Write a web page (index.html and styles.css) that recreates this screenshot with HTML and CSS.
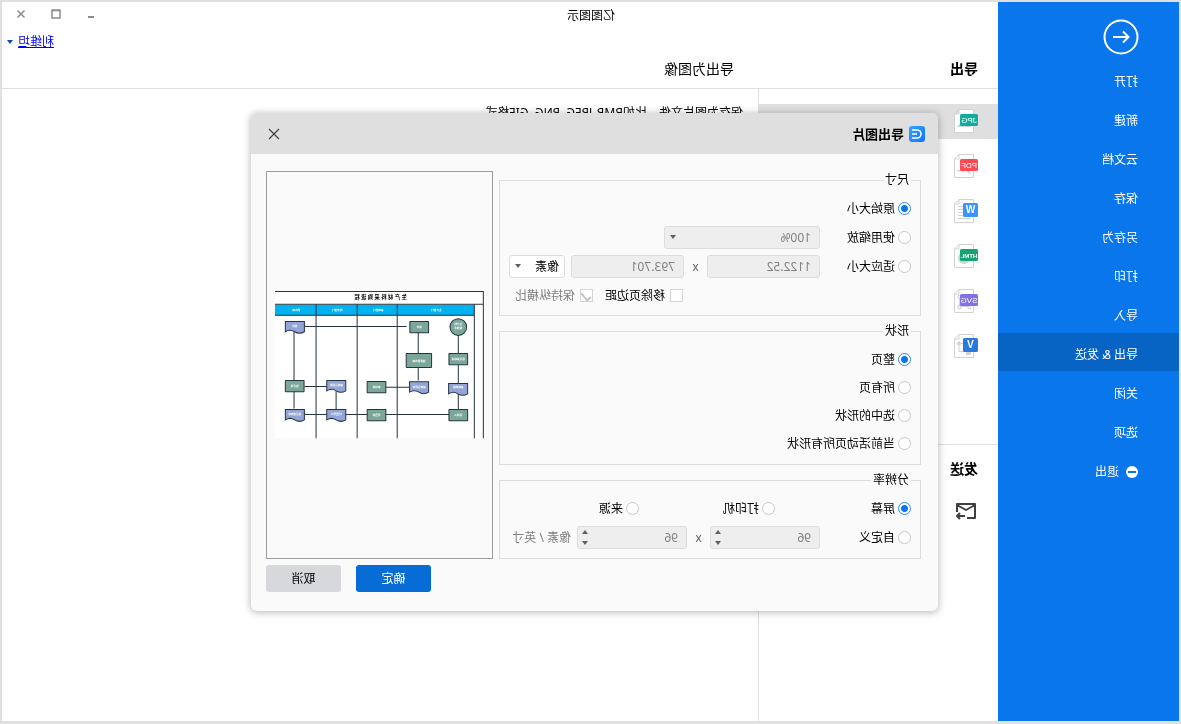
FILE: index.html
```html
<!DOCTYPE html>
<html lang="zh-CN">
<head>
<meta charset="utf-8">
<title>亿图图示</title>
<link rel="stylesheet" href="styles.css">
</head>
<body>
<div class="app">
  <nav class="sidebar">
    <button class="back" aria-label="返回">
      <svg viewBox="0 0 36 36"><circle cx="18" cy="18" r="16.5"/><path d="M26 18H11M16 12.500 10.500 18l5.500 5.500"/></svg>
    </button>
    <a class="nav-item" href="#">打开</a>
    <a class="nav-item" href="#">新建</a>
    <a class="nav-item" href="#">云文档</a>
    <a class="nav-item" href="#">保存</a>
    <a class="nav-item" href="#">另存为</a>
    <a class="nav-item" href="#">打印</a>
    <a class="nav-item" href="#">导入</a>
    <a class="nav-item active" href="#">导出 &amp; 发送</a>
    <a class="nav-item" href="#">关闭</a>
    <a class="nav-item" href="#">选项</a>
    <a class="nav-item" href="#">
      <svg class="exit-icon" viewBox="0 0 12 12"><circle cx="6" cy="6" r="6" fill="#fff"/><path d="M2 6h8" stroke="#0a76ec" stroke-width="2"/></svg>
      退出</a>
  </nav>

  <div class="main">
    <header class="topbar">
      <div class="titlebar">
        <span class="app-title">亿图图示</span>
        <div class="win-controls">
          <button aria-label="最小化"><svg viewBox="0 0 10 10"><path d="M2 8h6" stroke-width="2"/></svg></button>
          <button aria-label="最大化"><svg viewBox="0 0 10 10"><path d="M1 1h8v8H1zM1 1.500h8"/></svg></button>
          <button aria-label="关闭窗口"><svg viewBox="0 0 10 10"><path d="M1.500 1.500l7 7M8.500 1.500l-7 7"/></svg></button>
        </div>
      </div>
      <div class="account"><a href="#">利维坦</a><svg viewBox="0 0 6 4"><path d="M0 0h6L3 4z"/></svg></div>
      <div class="headings"><h2 class="list-heading">导出</h2><h1 class="page-heading">导出为图像</h1></div>
    </header>

    <div class="content">
      <section class="list">
        <div class="formats">
          <button class="format selected" aria-label="JPG"><svg viewBox="0 0 24 24">
            <path class="page" d="M4.500.5H19l4.500 4.500v18.500h-19zM19 .5V5h4.500"/><path class="ghost" d="M7 18l5-6 4 4 2-2 3 4z"/>
            <rect y="5" width="18" height="12" rx="1.500" fill="#12ae9c"/><text x="9" y="14">JPG</text></svg></button>
          <button class="format" aria-label="PDF"><svg viewBox="0 0 24 24">
            <path class="page" d="M4.500.5H19l4.500 4.500v18.500h-19zM19 .5V5h4.500"/><path class="ghost" d="M7 20q1-3 4-4h10v1.500q-6 0-9-.5-2 3-5 3z"/>
            <rect y="5" width="18" height="12" rx="1.500" fill="#fb4b55"/><text x="9" y="14">PDF</text></svg></button>
          <button class="format" aria-label="Word"><svg viewBox="0 0 24 24">
            <path class="page" d="M4.500.5H19l4.500 4.500v18.500h-19zM19 .5V5h4.500M9 7.500h11M9 10.500h11M9 13.500h11M9 16.500h11M7 19.500h13"/>
            <rect y="4" width="15" height="14" rx="1.500" fill="#3b93fb"/><text class="big" x="7.500" y="14">W</text></svg></button>
          <button class="format" aria-label="HTML"><svg viewBox="0 0 24 24">
            <path class="page" d="M4.500.5H19l4.500 4.500v18.500h-19zM19 .5V5h4.500"/><circle class="ghost" cx="14" cy="14" r="6"/>
            <rect y="5" width="18" height="12" rx="1.500" fill="#12a572"/><text class="small" x="9" y="13.500">HTML</text></svg></button>
          <button class="format" aria-label="SVG"><svg viewBox="0 0 24 24">
            <path class="page" d="M4.500.5H19l4.500 4.500v18.500h-19zM19 .5V5h4.500M8.500 8.500h10v9h-10zM17 6.500h3v3h-3zM17 16.500h3v3h-3zM7 16.500h3v3H7z"/>
            <rect y="5" width="18" height="12" rx="1.500" fill="#8470e4"/><text x="9" y="14">SVG</text></svg></button>
          <button class="format" aria-label="Visio"><svg viewBox="0 0 24 24">
            <path class="page" d="M4.500.5H19l4.500 4.500v18.500h-19zM19 .5V5h4.500M15 9.500h4v8h-9v2"/><path class="ghost" d="M19 7l2.500 2.500L19 12l-2.500-2.500zM7 17h5v4H7z"/>
            <rect y="4" width="15" height="14" rx="1.500" fill="#2b79dc"/><text class="big" x="7.500" y="14">V</text></svg></button>
        </div>
        <div class="send">
          <h2 class="list-heading">发送</h2>
          <button class="mail" aria-label="发送邮件"><svg viewBox="0 0 22 18"><path d="M10 16H2V2h18v8M2 3l9 5 9-5M12 14h8M17 11l3 3-3 3"/></svg></button>
        </div>
      </section>
      <section class="detail"><p>保存为图片文件，比如BMP, JPEG, PNG, GIF格式</p></section>
    </div>
  </div>

  <div class="dialog" role="dialog" aria-labelledby="dialog-title">
    <div class="dialog-head">
      <svg class="logo" viewBox="0 0 16 16"><defs><linearGradient id="lg" x1="0" y1="1" x2="1" y2="0"><stop stop-color="#1173ff"/><stop offset="1" stop-color="#35a5ff"/></linearGradient></defs><rect width="16" height="16" rx="3" fill="url(#lg)"/><path d="M13 4H8a4 4 0 0 0 0 8h5M8 8h5" fill="none" stroke="#fff" stroke-width="1.600"/></svg>
      <h2 id="dialog-title">导出图片</h2>
      <button class="close" aria-label="关闭对话框"><svg viewBox="0 0 12 12"><path d="M1 1l10 10M11 1L1 11"/></svg></button>
    </div>
    <form class="dialog-body">
      <div class="settings">
        <fieldset>
          <legend>尺寸</legend>
          <div class="row"><label class="choice"><input type="radio" name="size" checked>原始大小</label></div>
          <div class="row">
            <label class="choice"><input type="radio" name="size">使用缩放</label>
            <div class="picker wide"><select aria-label="缩放" disabled><option>100%</option></select><svg viewBox="0 0 6 4"><path d="M0 0h6L3 4z"/></svg></div>
          </div>
          <div class="row">
            <label class="choice"><input type="radio" name="size">适应大小</label>
            <input class="field" type="text" value="1122.52" aria-label="宽度" disabled>
            <span class="times">x</span>
            <input class="field" type="text" value="793.701" aria-label="高度" disabled>
            <div class="picker unit"><select aria-label="单位"><option>像素</option></select><svg viewBox="0 0 6 4"><path d="M0 0h6L3 4z"/></svg></div>
          </div>
          <div class="row checks">
            <label class="check"><input type="checkbox">移除页边距</label>
            <label class="check off"><input type="checkbox" checked disabled>保持纵横比</label>
          </div>
        </fieldset>
        <fieldset class="shape">
          <legend>形状</legend>
          <div class="row"><label class="choice"><input type="radio" name="shape" checked>整页</label></div>
          <div class="row"><label class="choice"><input type="radio" name="shape">所有页</label></div>
          <div class="row"><label class="choice"><input type="radio" name="shape">选中的形状</label></div>
          <div class="row"><label class="choice"><input type="radio" name="shape">当前活动页所有形状</label></div>
        </fieldset>
        <fieldset>
          <legend>分辨率</legend>
          <div class="row">
            <label class="choice"><input type="radio" name="dpi" checked>屏幕</label>
            <label class="choice printer"><input type="radio" name="dpi">打印机</label>
            <label class="choice"><input type="radio" name="dpi">来源</label>
          </div>
          <div class="row">
            <label class="choice"><input type="radio" name="dpi">自定义</label>
            <div class="spin"><input class="field" type="number" value="96" aria-label="水平分辨率" disabled><svg viewBox="0 0 6 15"><path d="M0 4h6L3 0zM0 11h6l-3 4z"/></svg></div>
            <span class="times">x</span>
            <div class="spin"><input class="field" type="number" value="96" aria-label="垂直分辨率" disabled><svg viewBox="0 0 6 15"><path d="M0 4h6L3 0zM0 11h6l-3 4z"/></svg></div>
            <span class="unit-text">像素 / 英寸</span>
          </div>
        </fieldset>
      </div>
      <div class="preview">
        <svg viewBox="0 0 626 441">
          <defs>
            <path id="doc" d="M0 0H57V31Q43 22 29 31T0 31Z"/>
            <rect id="box" width="56" height="34" rx="1"/>
          </defs>
          <rect width="626" height="441" fill="#fff"/>
          <rect x="29" y="41" width="597" height="32" fill="#00b2f0"/>
          <path class="line" d="M626 1.500H2V441M2 40H626M29 73H626M29 40V441M260 40V441M380 40V441M503 40V441"/>
          <path class="line" d="M232 106H538M569 121V268M569 302V352M470 286H538M443 300V355M104 370H538M224 288H295M197 124V187M197 229V268M77 133V187M77 221V277M77 307V355"/>
          <g class="green">
            <circle cx="77" cy="108" r="25"/>
            <use href="#box" x="166" y="91"/><rect x="157" y="187" width="76" height="42" rx="1"/>
            <use href="#box" x="49" y="187"/><use href="#box" x="539" y="268"/><use href="#box" x="294" y="271"/>
            <use href="#box" x="294" y="355"/><use href="#box" x="49" y="355"/>
          </g>
          <g class="blue">
            <use href="#doc" x="538" y="91"/><use href="#doc" x="166" y="272"/><use href="#doc" x="49" y="277"/>
            <use href="#doc" x="414" y="268"/><use href="#doc" x="414" y="355"/><use href="#doc" x="538" y="355"/>
          </g>
          <text class="chart-title" x="310" y="24">生 产 材 料 采 购 流 程</text>
          <g class="tiny">
            <text x="143" y="60">生产部门</text><text x="317" y="60">采购部门</text><text x="440" y="60">财务部门</text><text x="562" y="60">供应商</text>
            <text x="77" y="103">生产材</text><text x="77" y="113">料需求</text>
            <text x="77" y="206">填写采购单</text><text x="77" y="292">采购申请</text><text x="77" y="374">验收入</text>
            <text x="194" y="112">询价</text><text x="195" y="212">选择供应商</text><text x="194" y="290">采购合同单</text>
            <text x="322" y="292">审批单</text><text x="322" y="374">付款单</text>
            <text x="442" y="284">采购合同单</text><text x="442" y="371">付款凭证</text>
            <text x="567" y="107">报价</text><text x="567" y="289">签订单</text><text x="567" y="371">发货通知单</text>
          </g>
        </svg>
      </div>
      <div class="actions"><button type="button" class="ok">确定</button><button type="button" class="cancel">取消</button></div>
    </form>
  </div>
</div>
</body>
</html>
```

FILE: styles.css
```css
* { box-sizing: border-box; }

body {
  margin: 0;
  background: #fff;
  color: #000;
  font: 12px/18px "Noto Sans", "Noto Sans CJK SC", sans-serif;
}

button, input, select {
  font: inherit;
  color: inherit;
}

button {
  padding: 0;
  border: 0;
  background: none;
}

h1, h2, p { margin: 0; }

/* The whole window is shown as a mirror image. */
.app {
  position: relative;
  display: flex;
  min-height: 100vh;
  border: 2px solid #e0e0e0;
  border-bottom-width: 3px;
  transform: scaleX(-1);
}

/* Sidebar */
.sidebar {
  flex: 0 0 181px;
  padding-top: 17px;
  background: #0a76ec;
  color: #fff;
}

.back {
  display: block;
  width: 36px;
  height: 36px;
  margin: 0 0 5px 40px;
}

.back svg {
  display: block;
  fill: none;
  stroke: #fff;
  stroke-width: 2;
}

.nav-item {
  display: flex;
  align-items: center;
  gap: 7px;
  height: 38px;
  margin-bottom: 1px;
  padding: 5px 0 0 41px;
  color: #fff;
  text-decoration: none;
}

.nav-item.active { background: #0864c4; }

.exit-icon {
  width: 12px;
  height: 12px;
}

/* Header */
.main {
  flex: 1;
  display: flex;
  flex-direction: column;
  min-width: 0;
}

.topbar {
  height: 87px;
  border-bottom: 1px solid #dfdfdf;
}

.titlebar {
  display: flex;
  justify-content: space-between;
  padding: 5px 14px 0 383px;
}

.win-controls {
  display: flex;
  gap: 25px;
  padding-top: 2px;
}

.win-controls button {
  width: 10px;
  height: 10px;
}

.win-controls svg {
  display: block;
  fill: none;
  stroke: #8c8c8c;
  stroke-width: 1.5;
}

.account {
  display: flex;
  align-items: center;
  justify-content: flex-end;
  gap: 5px;
  padding: 8px 5px 0 0;
}

.account a { color: #00f; }

.account svg {
  width: 6px;
  height: 4px;
  fill: #0a4fa8;
}

.headings {
  display: flex;
  padding-top: 8px;
}

.list-heading {
  padding-left: 20px;
  font-size: 14px;
  line-height: 20px;
  font-weight: 700;
}

.headings .list-heading { width: 240px; }

.page-heading {
  padding-left: 24px;
  font-size: 14px;
  line-height: 20px;
  font-weight: 400;
}

/* Content */
.content {
  flex: 1;
  display: flex;
}

.list {
  flex: 0 0 240px;
  border-right: 1px solid #dfdfdf;
}

.formats {
  display: flex;
  flex-direction: column;
  gap: 10px;
  height: 356px;
  padding-top: 15px;
  border-bottom: 1px solid #dfdfdf;
}

.format {
  height: 35px;
  padding: 0 0 1px 20px;
  text-align: left;
}

.format.selected { background: #dfdfdf; }

.format svg {
  display: block;
  width: 24px;
  height: 24px;
}

.format text {
  fill: #fff;
  font: 400 8px "Liberation Sans", sans-serif;
  text-anchor: middle;
}

.format .small { font-size: 6px; font-weight: 700; }
.format .big { font-size: 10px; font-weight: 700; }

.page {
  fill: #fff;
  stroke: #d2d2d2;
}

.ghost { fill: #d2d2d2; }

.send { padding-top: 14px; }

.mail {
  display: block;
  width: 22px;
  margin: 23px 0 0 21px;
}

.mail svg {
  display: block;
  fill: none;
  stroke: #404040;
  stroke-width: 2;
  stroke-linejoin: round;
}

.detail {
  flex: 1;
  padding: 15px;
}

/* Dialog */
.dialog {
  position: absolute;
  top: 111px;
  left: 241px;
  width: 687px;
  border-radius: 6px;
  background: #fafafa;
  box-shadow: 0 1px 7px 1px rgba(0, 0, 0, 0.25);
}

.dialog-head {
  display: flex;
  align-items: center;
  gap: 5px;
  height: 41px;
  padding: 0 17px 0 13px;
  border-radius: 6px 6px 0 0;
  background: #dfdfdf;
}

.logo {
  width: 16px;
  height: 16px;
}

.dialog-head h2 {
  flex: 1;
  font-size: 13px;
  font-weight: 700;
}

.close {
  width: 12px;
  height: 12px;
}

.close svg {
  display: block;
  stroke: #404040;
  stroke-width: 1.2;
}

.dialog-body {
  display: grid;
  grid-template-columns: 1fr 227px;
  gap: 6px;
  padding: 17px 15px 19px 17px;
}

.settings {
  display: flex;
  flex-direction: column;
  gap: 6px;
}

fieldset {
  display: flex;
  flex-direction: column;
  gap: 6px;
  min-width: 0;
  margin: 0;
  padding: 8px 9px;
  border: 1px solid #dcdddf;
}

.shape {
  gap: 5px;
  padding-bottom: 9px;
}

fieldset:last-child { padding-bottom: 9px; }

legend {
  padding: 0 2px;
  line-height: 18px;
}

.row {
  display: flex;
  align-items: center;
  height: 23px;
}

.choice {
  display: flex;
  align-items: center;
  gap: 3px;
  min-width: 91px;
}

.choice input {
  appearance: none;
  width: 13px;
  height: 13px;
  margin: 0;
  border: 1px solid #c8c8c8;
  border-radius: 50%;
  background: #fff;
}

.choice input:checked {
  border-color: #2f86ea;
  background: radial-gradient(circle, #0a76ec 3px, #fff 4px);
}

.printer {
  width: 136px;
  margin-left: 45px;
}

.field, .picker select {
  width: 113px;
  height: 23px;
  margin: 0;
  padding: 0 8px;
  border: 1px solid #dcdde0;
  border-radius: 3px;
  background: #eee;
  color: #808080;
}

.picker, .spin { position: relative; }

.picker select {
  appearance: none;
  width: 100%;
  opacity: 1;
}

.picker.wide { width: 156px; }

.picker.unit {
  width: 56px;
  margin-left: 6px;
}

.unit select {
  padding: 0 5px;
  background: #fff;
  color: #000;
}

.picker svg {
  position: absolute;
  top: 9px;
  right: 6px;
  width: 6px;
  height: 4px;
  fill: #606060;
}

.spin .field {
  display: block;
  width: 110px;
  appearance: textfield;
}

.spin svg {
  position: absolute;
  top: 4px;
  right: 5px;
  width: 6px;
  height: 15px;
  fill: #606060;
}

.times {
  width: 23px;
  color: #606060;
  text-align: center;
}

.unit-text {
  margin-left: 6px;
  color: #808080;
}

.checks {
  gap: 12px;
  padding-left: 228px;
}

.check {
  display: flex;
  align-items: center;
  gap: 5px;
}

.check input {
  appearance: none;
  display: grid;
  place-items: center;
  width: 13px;
  height: 13px;
  margin: 0;
  border: 1px solid #d4d5d8;
  background: #fff;
}

.check input:checked::after {
  content: "";
  width: 4px;
  height: 8px;
  border: solid #c4c4c4;
  border-width: 0 2px 2px 0;
  transform: rotate(40deg);
}

.check.off { color: #808080; }

.preview {
  display: flex;
  align-items: center;
  padding: 0 8px;
  border: 1px solid #9c9c9c;
}

.preview svg { width: 100%; }

.line {
  fill: none;
  stroke: #26343f;
  stroke-width: 3;
}

.green, .blue {
  stroke: #26343f;
  stroke-width: 3;
}

.green { fill: #7ba69a; }
.blue { fill: #93a5d6; }

.chart-title {
  font-size: 16px;
  font-weight: 700;
  text-anchor: middle;
}

.tiny {
  fill: #fff;
  font-size: 8px;
  font-weight: 700;
  text-anchor: middle;
}

.actions {
  grid-column: 1 / -1;
  display: flex;
  justify-content: flex-end;
  gap: 15px;
}

.actions button {
  width: 75px;
  height: 27px;
  border-radius: 3px;
  background: #d6d8dc;
}

.actions .ok {
  background: #086cd6;
  color: #fff;
}
```
